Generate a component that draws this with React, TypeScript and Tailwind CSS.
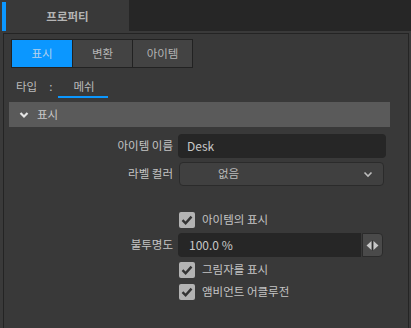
import { ReactNode } from "react";

const font = { fontFamily: '"Noto Sans CJK KR", "Noto Sans", sans-serif' };

function Check({ label }: { label: string }) {
  return (
    <div className="flex h-[16px] items-center gap-[7px]">
      <div className="flex h-[16px] w-[16px] items-center justify-center rounded-[2px] bg-[#b3b3b3]">
        <svg width="12" height="12" viewBox="0 0 12 12">
          <path d="M1.5 6.2 L4.6 9.3 L10.5 2.6" fill="none" stroke="#333" strokeWidth="2.4" />
        </svg>
      </div>
      <span className="text-[11.5px] text-[#c4c4c4]">{label}</span>
    </div>
  );
}

function Row({ label, children }: { label: string; children: ReactNode }) {
  return (
    <div className="flex items-center">
      <div className="w-[174px] pr-[5px] text-right text-[11.5px] text-[#c4c4c4]">{label}</div>
      {children}
    </div>
  );
}

export default function App() {
  return (
    <div className="h-[328px] w-[411px] overflow-hidden bg-[#3a3a3a]" style={font}>
      <div className="flex h-[31px] bg-[#262626]">
        <div className="flex w-[129px] items-center bg-[#393939] pt-[2px]">
          <div className="ml-[2px] h-full w-[4px] bg-[#0b97ff]" />
          <div className="flex-1 text-center text-[11.5px] font-bold text-[#b4b4b4]">프로퍼티</div>
        </div>
      </div>

      <div className="ml-[3px] mt-[2px] h-[300px] w-[406px] border border-[#242424] bg-[#393939]">
        <div className="ml-[7px] mt-[5px] flex h-[29px] w-[182px] border border-[#222] text-[11.5px]">
          <div className="flex w-[60px] items-center justify-center bg-[#0b97ff] text-[#b5d2ee]">표시</div>
          <div className="flex w-[60px] items-center justify-center border-l border-[#222] bg-[#434343] text-[#b4b4b4]">변환</div>
          <div className="flex flex-1 items-center justify-center border-l border-[#222] bg-[#434343] text-[#b4b4b4]">아이템</div>
        </div>

        <div className="relative mt-[8px] flex h-[22px] items-center text-[11.5px] text-[#bcbcbc]">
          <span className="ml-[12px]">타입</span>
          <span className="ml-[12px]">:</span>
          <span className="ml-[21px]">메쉬</span>
          <div className="absolute left-[54px] top-[20px] h-[2px] w-[50px] bg-[#0b97ff]" />
        </div>

        <div className="ml-[5px] mt-[4px] flex h-[25px] w-[381px] items-center bg-[#5a5a5a]">
          <svg className="ml-[10px]" width="10" height="8" viewBox="0 0 10 8">
            <path d="M1.5 2 L5 5.5 L8.5 2" fill="none" stroke="#e6e6e6" strokeWidth="2.2" />
          </svg>
          <span className="ml-[8px] text-[11.5px] text-[#c8c8c8]">표시</span>
        </div>

        <div className="mt-[7px] flex flex-col gap-[4px]">
          <Row label="아이템 이름">
            <div className="flex h-[24px] w-[208px] items-center rounded-[4px] bg-[#262626] pl-[9px] text-[12px] text-[#c8c8c8]">
              Desk
            </div>
          </Row>
          <Row label="라벨 컬러">
            <div className="ml-[1px] flex h-[24px] w-[205px] items-center rounded-[4px] border border-[#2b2b2b] bg-[#404040] pl-[38px] pr-[10px] text-[11.5px] text-[#bcbcbc]">
              <span className="flex-1">없음</span>
              <svg width="10" height="7" viewBox="0 0 10 7">
                <path d="M1.5 1.5 L5 5 L8.5 1.5" fill="none" stroke="#bdbdbd" strokeWidth="1.6" />
              </svg>
            </div>
          </Row>
        </div>

        <div className="ml-[175px] mt-[26px]">
          <Check label="아이템의 표시" />
        </div>

        <div className="mt-[5px]">
          <Row label="불투명도">
            <div className="flex h-[24px] w-[205px]">
              <div className="flex flex-1 items-center rounded-l-[4px] bg-[#262626] pl-[11px] text-[12px] text-[#c8c8c8]">
                100.0 %
              </div>
              <div className="ml-[1px] flex w-[21px] items-center justify-center rounded-r-[4px] border border-[#2b2b2b] bg-[#4a4a4a]">
                <svg width="13" height="11" viewBox="0 0 13 11">
                  <path d="M5.5 1 L0.5 5.5 L5.5 10 Z" fill="#c8c8c8" />
                  <path d="M7.5 1 L12.5 5.5 L7.5 10 Z" fill="#c8c8c8" />
                  <rect x="6" y="0.5" width="1" height="10" fill="#2f2f2f" />
                </svg>
              </div>
            </div>
          </Row>
        </div>

        <div className="ml-[175px] mt-[5px] flex flex-col gap-[6px]">
          <Check label="그림자를 표시" />
          <Check label="앰비언트 어클루전" />
        </div>
      </div>
    </div>
  );
}
